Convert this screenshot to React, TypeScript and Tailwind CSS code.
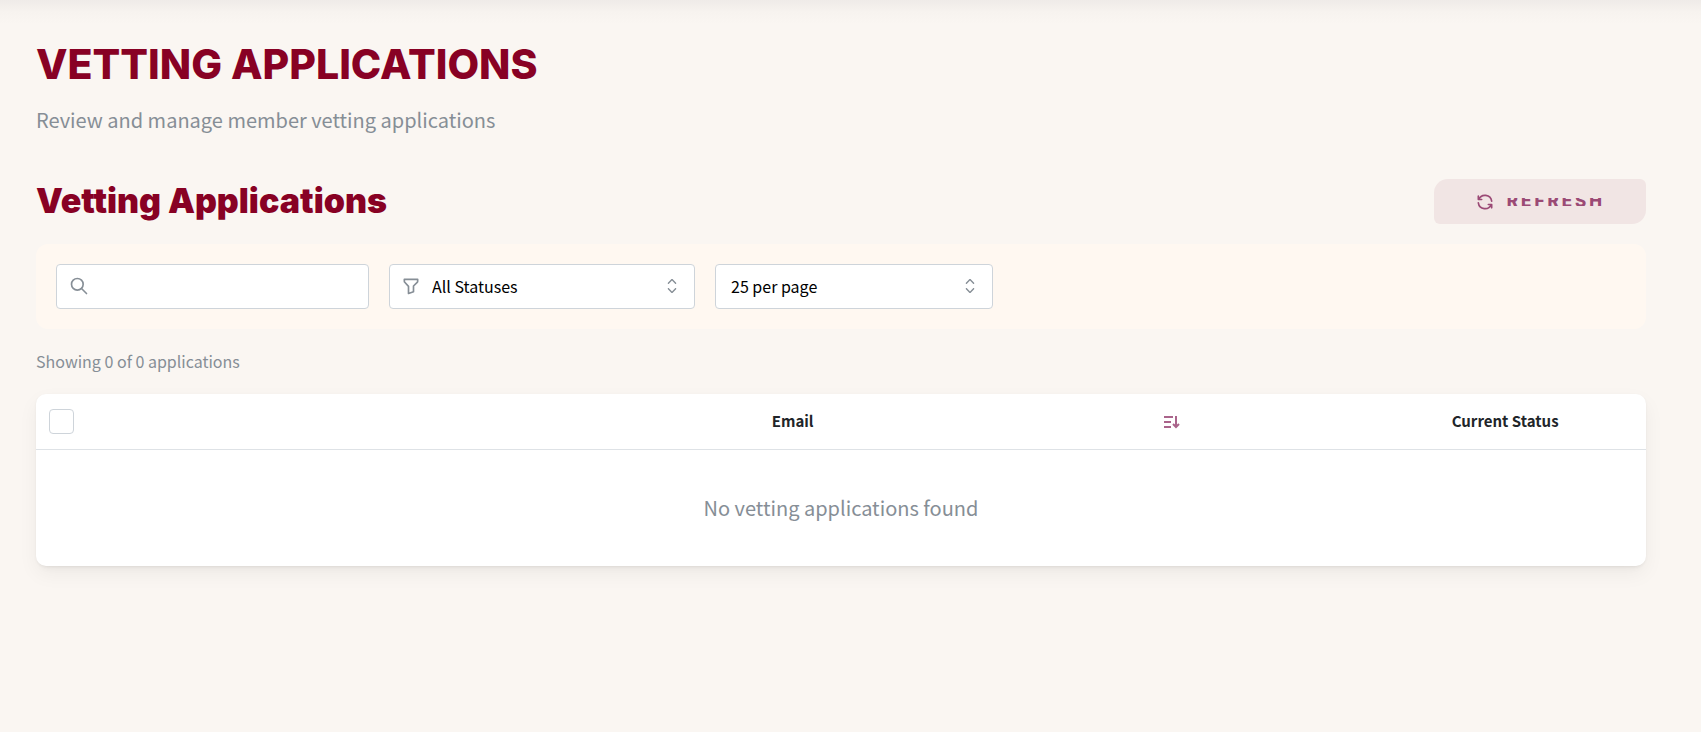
import { TbFilter, TbRefresh, TbSearch } from "react-icons/tb";

function Chevrons() {
  return (
    <svg viewBox="0 0 15 15" className="pointer-events-none absolute top-2.5 right-[11px] size-6 text-[#868e96]" fill="currentColor" aria-hidden="true">
      <path fillRule="evenodd" clipRule="evenodd" d="M4.93179 5.43179C4.75605 5.60753 4.75605 5.89245 4.93179 6.06819C5.10753 6.24392 5.39245 6.24392 5.56819 6.06819L7.49999 4.13638L9.43179 6.06819C9.60753 6.24392 9.89245 6.24392 10.0682 6.06819C10.2439 5.89245 10.2439 5.60753 10.0682 5.43179L7.81819 3.18179C7.73379 3.0974 7.61933 3.04999 7.49999 3.04999C7.38064 3.04999 7.26618 3.0974 7.18179 3.18179L4.93179 5.43179ZM10.0682 9.56819C10.2439 9.39245 10.2439 9.10753 10.0682 8.93179C9.89245 8.75606 9.60753 8.75606 9.43179 8.93179L7.49999 10.8636L5.56819 8.93179C5.39245 8.75606 5.10753 8.75606 4.93179 8.93179C4.75605 9.10753 4.75605 9.39245 4.93179 9.56819L7.18179 11.8182C7.35753 11.9939 7.64245 11.9939 7.81819 11.8182L10.0682 9.56819Z" />
    </svg>
  );
}

const body = "font-['Noto_Sans_CJK_SC',sans-serif]";
const control = "h-[45px] w-full appearance-none rounded border border-[#ced4da] bg-white pb-0.5 text-base text-black outline-none";

export default function App() {
  return (
    <div className={`${body} min-h-screen bg-[#faf6f2]`}>
      <div className="h-6 bg-linear-to-b from-[#efebe8] via-[#f7f3ef] to-[#faf6f2]" />
      <main className="pr-[55px] pl-9">
        <h1 className="pt-4 font-['Inter',sans-serif] text-[41px] leading-12 font-extrabold text-[#880124]">VETTING APPLICATIONS</h1>
        <p className="mt-4 text-[20px] leading-8 text-[#868e96]">Review and manage member vetting applications</p>

        <div className="mt-[43px] flex items-center justify-between">
          <h2 className="pb-0.5 font-['Inter',sans-serif] text-[34px] leading-10 font-black text-[#880124]">Vetting Applications</h2>
          <button className="flex h-[45px] items-center gap-3 rounded-tl-[14px] rounded-tr-md rounded-br-[14px] rounded-bl-md bg-[#f1e5e4] px-[41px] text-[#9b4a75]">
            <TbRefresh className="size-5" />
            <span className="flex h-2 items-center overflow-hidden font-['Inter',sans-serif] text-[17px] font-extrabold tracking-[3px]">REFRESH</span>
          </button>
        </div>

        <div className="mt-5 flex gap-5 rounded-xl bg-[#fff8f1] p-5">
          <div className="relative w-[313px]">
            <TbSearch className="absolute top-3 left-[13px] size-5 text-[#868e96]" />
            <input type="text" aria-label="Search applications" className={`${control} pr-3 pl-10`} />
          </div>
          <div className="relative w-[306px]">
            <TbFilter className="absolute top-3 left-3 size-5 text-[#868e96]" />
            <select aria-label="Status" className={`${control} pr-10 pl-[42px]`}>
              <option>All Statuses</option>
            </select>
            <Chevrons />
          </div>
          <div className="relative w-[278px]">
            <select aria-label="Page size" className={`${control} pr-10 pl-[15px]`}>
              <option>25 per page</option>
            </select>
            <Chevrons />
          </div>
        </div>

        <p className="mt-5 text-base leading-6 text-[#868e96]">Showing 0 of 0 applications</p>

        <div className="mt-[21px] overflow-hidden rounded-[10px] bg-white shadow-[0_1px_3px_rgba(0,0,0,0.05),0_8px_20px_rgba(0,0,0,0.05),0_7px_7px_-5px_rgba(0,0,0,0.04)]">
          <table className="w-full table-fixed border-separate border-spacing-0">
            <colgroup>
              <col className="w-[4%]" />
              <col className="w-[31.4%]" />
              <col className="w-[23.2%]" />
              <col className="w-[23.9%]" />
              <col className="w-[17.5%]" />
            </colgroup>
            <thead>
              <tr className="h-14 text-[15px] text-[#212529] *:border-b *:border-[#dee2e6]">
                <th className="pl-[13px] text-left">
                  <input type="checkbox" aria-label="Select all applications" className="block size-[25px] appearance-none rounded border border-[#ced4da] bg-white" />
                </th>
                <td />
                <th className="font-bold">Email</th>
                <th>
                  <button aria-label="Sort" className="mx-auto block text-[#aa648b]">
                    <svg viewBox="0 0 16 16" className="size-4" fill="none" stroke="currentColor" strokeWidth="2" aria-hidden="true">
                      <path d="M0 3h9M0 8h7M0 13h7M12 2v11" />
                      <path d="M9 10l3 3l3-3" />
                    </svg>
                  </button>
                </th>
                <th className="font-bold">Current Status</th>
              </tr>
            </thead>
            <tbody>
              <tr className="h-[116px]">
                <td colSpan={5} className="text-center text-[20px] text-[#868e96]">No vetting applications found</td>
              </tr>
            </tbody>
          </table>
        </div>
      </main>
    </div>
  );
}
